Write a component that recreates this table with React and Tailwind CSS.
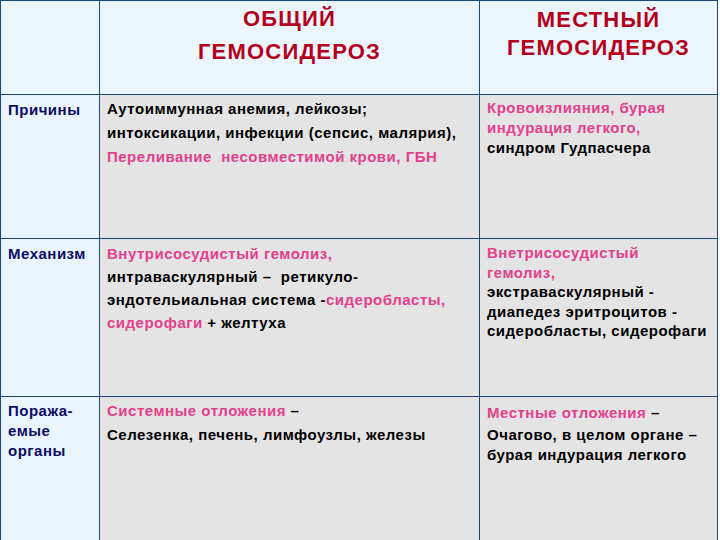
export default function App() {
  const pink = "text-[#e33f8b]";
  const cell = "border-r border-b border-[#1b4877] overflow-hidden";
  return (
    <div className="w-[720px] h-[540px] bg-white overflow-hidden">
      <div
        className="grid grid-cols-[99px_380px_238px] grid-rows-[94px_144px_158px_150px] border-l border-t border-[#1b4877] w-[718px] font-bold text-[15px] tracking-[0.5px] text-black whitespace-nowrap"
        style={{ fontFamily: '"Liberation Sans", Arial, sans-serif' }}
      >
        {/* header */}
        <div className={`${cell} bg-[#eaf5fc]`}></div>
        <div className={`${cell} bg-[#eaf5fc] text-center text-[#b4001c] text-[22px] tracking-[1.2px] leading-[33px] pt-[1px]`}>
          <div>ОБЩИЙ</div>
          <div>ГЕМОСИДЕРОЗ</div>
        </div>
        <div className={`${cell} bg-[#eaf5fc] text-center text-[#b4001c] text-[22px] tracking-[1.2px] leading-[28px] pt-[5px]`}>
          <div>МЕСТНЫЙ</div>
          <div>ГЕМОСИДЕРОЗ</div>
        </div>

        {/* row 1 */}
        <div className={`${cell} bg-[#eaf4fd] text-[#0c0c66] pl-[7px] pt-[3px] leading-[24px]`}>Причины</div>
        <div className={`${cell} bg-[#e4e4e4] pl-[7px] pt-[2px] leading-[24px]`}>
          <div>Аутоиммунная анемия, лейкозы;</div>
          <div>интоксикации, инфекции (сепсис, малярия),</div>
          <div className={pink}>Переливание&nbsp; несовместимой крови, ГБН</div>
        </div>
        <div className={`${cell} bg-[#e4e4e4] pl-[7px] pt-[3px] leading-[20px]`}>
          <div className={pink}>Кровоизлияния, бурая</div>
          <div className={pink}>индурация легкого,</div>
          <div>синдром Гудпасчера</div>
        </div>

        {/* row 2 */}
        <div className={`${cell} bg-[#eaf4fd] text-[#0c0c66] pl-[7px] pt-[3px] leading-[23px]`}>Механизм</div>
        <div className={`${cell} bg-[#e4e4e4] pl-[7px] pt-[3px] leading-[23px]`}>
          <div className={pink}>Внутрисосудистый гемолиз,</div>
          <div>интраваскулярный –&nbsp; ретикуло-</div>
          <div>
            эндотельиальная система -<span className={pink}>сидеробласты,</span>
          </div>
          <div>
            <span className={pink}>сидерофаги</span> + желтуха
          </div>
        </div>
        <div className={`${cell} bg-[#e4e4e4] pl-[7px] pt-[4px] leading-[19.5px]`}>
          <div className={pink}>Внетрисосудистый</div>
          <div className={pink}>гемолиз,</div>
          <div>экстраваскулярный -</div>
          <div>диапедез эритроцитов -</div>
          <div>сидеробласты, сидерофаги</div>
        </div>

        {/* row 3 */}
        <div className={`${cell} bg-[#eaf4fd] text-[#0c0c66] pl-[7px] pt-[4px] leading-[20px]`}>
          <div>Поража-</div>
          <div>емые</div>
          <div>органы</div>
        </div>
        <div className={`${cell} bg-[#e4e4e4] pl-[7px] pt-[2px] leading-[24px]`}>
          <div>
            <span className={pink}>Системные отложения</span> –
          </div>
          <div>Селезенка, печень, лимфоузлы, железы</div>
        </div>
        <div className={`${cell} bg-[#e4e4e4] pl-[7px] pt-[6px] leading-[20px]`}>
          <div className="mb-[2px]">
            <span className={pink}>Местные отложения</span> –
          </div>
          <div>Очагово, в целом органе –</div>
          <div>бурая индурация легкого</div>
        </div>
      </div>
    </div>
  );
}
